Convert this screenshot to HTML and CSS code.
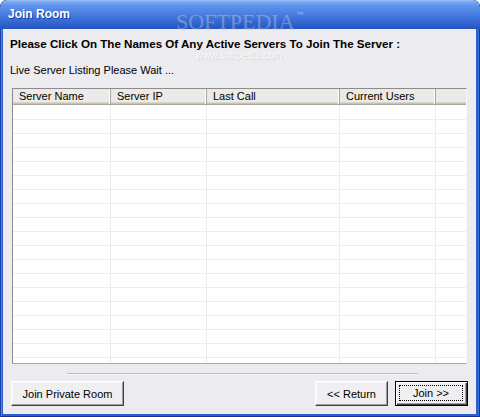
FILE: index.html
```
<!DOCTYPE html>
<html>
  <head>
    <meta charset="utf-8" />
    <title>Join Room</title>
    <link rel="stylesheet" href="styles.css">
  </head>
  <body>
    <div class="window">
      <div class="titlebar"><span class="title">Join Room</span></div>

      <div class="client">
        <p class="prompt">Please Click On The Names Of Any Active Servers To Join The Server :</p>
        <p class="status">Live Server Listing Please Wait ...</p>

        <div class="listview">
          <div class="lv-head">
            <div class="col">Server Name</div>
            <div class="col">Server IP</div>
            <div class="col">Last Call</div>
            <div class="col">Current Users</div>
            <div class="col"></div>
          </div>
          <div class="lv-body">
            <div class="cell"></div>
            <div class="cell"></div>
            <div class="cell"></div>
            <div class="cell"></div>
            <div class="cell"></div>
          </div>
        </div>

        <div class="separator"></div>

        <div class="buttons">
          <button class="btn wide">Join Private Room</button>
          <div class="btn-group">
            <button class="btn">&lt;&lt; Return</button>
            <button class="btn default"><span class="focus">Join &gt;&gt;</span></button>
          </div>
        </div>
      </div>

      <!-- watermark sits over the title bar -->
      <div class="watermark">
        <div class="wm-line"><span class="wm-big">SOFTPEDIA</span><span class="wm-tm">™</span></div>
        <div class="wm-url">www.softpedia.com</div>
      </div>
    </div>
  </body>
</html>
```

FILE: styles.css
```
body {
  margin: 0;
  background: #fff;
  font-family: 'Liberation Sans', Arial, sans-serif;
  font-size: 11px;
  color: #000;
}

* {
  box-sizing: border-box;
}

.window {
  position: relative;
  width: 480px;
  height: 417px;
  display: flex;
  flex-direction: column;
  background: #2b5fcc;
  border-radius: 7px 7px 0 0;
  box-shadow: inset 1px 0 #1a42a8, inset -1px -1px #12349a, inset 2px 0 #4f84e6, inset -2px 0 #3a6fdb;
  overflow: hidden;
}

.titlebar {
  height: 29px;
  display: flex;
  align-items: center;
  padding: 0 0 1px 8px;
  background: linear-gradient(to bottom, #9cc0f6 0, #7aa8f0 2px, #5c90ea 6px, #4f84e4 12px, #3d72da 18px, #2f62cd 24px, #2a5ac4 27px, #2352b9 29px);
  border-radius: 7px 7px 0 0;
}

.title {
  color: #fff;
  font-weight: bold;
  font-size: 12px;
  text-shadow: 1px 1px #1c3f9e;
}

.client {
  flex: 1;
  margin: 0 4px 3px 3px;
  padding-left: 7px;
  background: #ecebef;
  display: flex;
  flex-direction: column;
}

.prompt {
  margin: 8px 0 0;
  line-height: 14px;
  font-weight: bold;
  font-size: 11.6px;
}

.status {
  margin: 12px 0 0;
  line-height: 14px;
}

.listview {
  margin: 11px 0 0 2px;
  width: 455px;
  height: 276px;
  display: flex;
  flex-direction: column;
  background: #fff;
  border: 1px solid;
  border-color: #8c8c8c #f8f8f8 #a8a8a8 #8c8c8c;
}

.lv-head,
.lv-body {
  display: grid;
  grid-template-columns: 98px 96px 133px 96px 1fr;
}

.lv-head {
  height: 16px;
  background: #ebeae6;
  box-shadow: inset 0 -1px #aca899, inset 0 -2px #c5c2b8, inset 0 -3px #d8d5cc;
}

.lv-head .col {
  padding: 1px 0 0 6px;
  line-height: 13px;
  border-right: 1px solid #a7a6a2;
  box-shadow: inset -1px 0 #fff;
  margin-bottom: 1px;
}

.lv-head .col:last-child {
  border-right: 0;
  box-shadow: none;
}

.lv-body {
  flex: 1;
  background: repeating-linear-gradient(to bottom, #fff 0, #fff 13px, #eeeeee 13px, #eeeeee 14px);
  background-position: 0 1px;
}

.cell {
  border-right: 1px solid #ececec;
}

.cell:last-child {
  border-right: 0;
}

.separator {
  margin: 9px 0 0 57px;
  width: 351px;
  height: 2px;
  border-top: 1px solid #bdbbc0;
  border-bottom: 1px solid #f6f6f8;
}

.buttons {
  margin-top: 6px;
  display: flex;
  justify-content: space-between;
  padding-right: 8px;
}

.btn-group {
  display: flex;
  gap: 7px;
}

.btn {
  font: inherit;
  width: 73px;
  height: 25px;
  padding: 0;
  margin: 0;
  background: #efeef1;
  border: 1px solid;
  border-color: #fff #404040 #404040 #fff;
  box-shadow: inset -1px -1px #9d9ca0, inset 1px 1px #f7f7f9;
  color: #000;
}

.btn.wide {
  width: 113px;
  margin-left: 1px;
}

.btn.default {
  border: 1px solid #000;
  box-shadow: inset 1px 1px #fff, inset -1px -1px #404040, inset -2px -2px #9d9ca0;
  padding: 3px 4px 4px 3px;
}

.focus {
  display: flex;
  align-items: center;
  justify-content: center;
  height: 100%;
  border: 1px dotted #000;
}

.watermark {
  position: absolute;
  left: 176px;
  top: 10px;
  pointer-events: none;
}

.wm-line {
  display: flex;
  align-items: flex-start;
  line-height: 24px;
}

.wm-big {
  font-family: 'Liberation Serif', serif;
  font-size: 22px;
  color: rgba(255, 255, 255, 0.28);
  text-shadow: 1px 1px rgba(120, 120, 140, 0.18);
}

.wm-tm {
  font-size: 8px;
  line-height: 10px;
  margin-left: 1px;
  color: rgba(255, 255, 255, 0.4);
}

.wm-url {
  margin: 16px 0 0 20px;
  white-space: nowrap;
  font-size: 10px;
  line-height: 12px;
  color: rgba(255, 255, 255, 0.7);
  text-shadow: 1px 1px rgba(150, 150, 160, 0.25);
}
```
